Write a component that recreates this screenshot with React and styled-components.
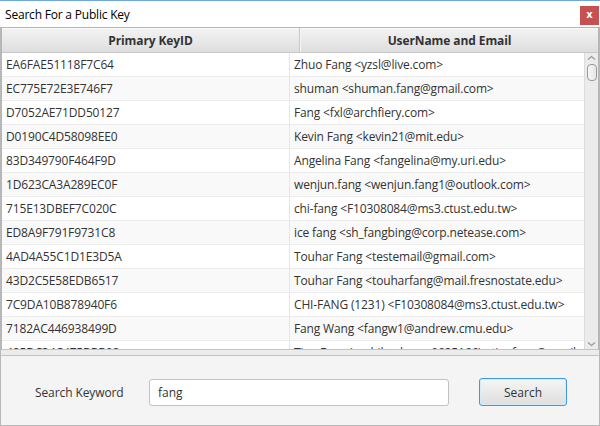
import React from 'react';
import styled, { createGlobalStyle } from 'styled-components';

const GlobalStyle = createGlobalStyle`
  html, body {
    margin: 0;
    padding: 0;
    background: #ffffff;
  }
  * { box-sizing: border-box; }
`;

const Window = styled.div`
  width: 600px;
  height: 426px;
  display: flex;
  flex-direction: column;
  font-family: "Open Sans", "Noto Sans", sans-serif;
  font-size: 12px;
  color: #333333;
  border-top: 1px solid #6fa7dd;
  overflow: hidden;
`;

const TitleBar = styled.div`
  height: 26px;
  flex: none;
  display: flex;
  align-items: center;
  justify-content: space-between;
  padding: 0 1px 0 5px;
  background: #ffffff;
  color: #000000;
  font-size: 12px;
  letter-spacing: -0.2px;
`;

const CloseButton = styled.div`
  width: 19px;
  height: 19px;
  margin-top: 2px;
  background: #c75050;
  color: #ffffff;
  font-family: "DejaVu Sans", sans-serif;
  font-weight: bold;
  font-size: 10px;
  display: flex;
  align-items: center;
  justify-content: center;
  line-height: 1;
`;

const Frame = styled.div`
  flex: 1;
  display: flex;
  flex-direction: column;
  border-left: 1px solid #b8b8b8;
  border-right: 1px solid #b8b8b8;
  border-bottom: 1px solid #b8b8b8;
  background: #f4f4f4;
  min-height: 0;
`;

const Table = styled.div`
  height: 323px;
  flex: none;
  display: flex;
  flex-direction: column;
  border: 1px solid #b5b5b5;
  border-bottom-color: #c4c4c4;
  background: #ffffff;
  overflow: hidden;
`;

const HeaderRow = styled.div`
  height: 25px;
  flex: none;
  display: grid;
  grid-template-columns: 298px 1fr;
  border-bottom: 1px solid #c8c8c8;
`;

const HeaderCell = styled.div`
  display: flex;
  align-items: center;
  justify-content: center;
  font-weight: bold;
  color: #333333;
  background: linear-gradient(to bottom, #f3f3f3 0%, #e9e9e9 50%, #dedede 100%);
  border-right: ${p => (p.last ? 'none' : '1px solid #c8c8c8')};
  border-left: ${p => (p.last ? '1px solid #f6f6f6' : 'none')};
  box-shadow: inset 0 1px 0 #fbfbfb;
  letter-spacing: -0.1px;
`;

const Body = styled.div`
  flex: 1;
  display: flex;
  min-height: 0;
`;

const Rows = styled.div`
  flex: 1;
  overflow: hidden;
`;

const Row = styled.div`
  height: 24px;
  display: grid;
  grid-template-columns: 288px 1fr;
  background: ${p => (p.odd ? '#f9f9f9' : '#ffffff')};
  border-bottom: 1px solid #ececec;
`;

const Cell = styled.div`
  display: flex;
  align-items: center;
  padding-left: 4px;
  white-space: nowrap;
  overflow: hidden;
  color: #333333;
  border-right: ${p => (p.last ? 'none' : '1px solid #e6e6e6')};
  letter-spacing: -0.15px;
`;

const ScrollBar = styled.div`
  width: 14px;
  flex: none;
  display: flex;
  flex-direction: column;
  align-items: center;
  background: #ebebeb;
  border-left: 1px solid #dcdcdc;
`;

const Arrow = styled.div`
  height: 10px;
  width: 100%;
  display: flex;
  align-items: center;
  justify-content: center;
  flex: none;
`;

const Thumb = styled.div`
  width: 10px;
  height: 17px;
  margin-top: 1px;
  border: 1px solid #9a9a9a;
  border-radius: 4px;
  background: linear-gradient(to right, #f6f6f6, #e6e6e6);
`;

const Track = styled.div`
  flex: 1;
`;

const Divider = styled.div`
  height: 6px;
  flex: none;
  background: #ececec;
  border-bottom: 1px solid #c4c4c4;
`;

const Controls = styled.div`
  flex: 1;
  display: flex;
  align-items: center;
  padding: 3px 0 0 34px;
  background: #f4f4f4;
`;

const Label = styled.div`
  width: 114px;
  color: #333333;
  letter-spacing: -0.1px;
`;

const Input = styled.input`
  width: 300px;
  height: 27px;
  border: 1px solid #c2c2c2;
  border-radius: 3px;
  padding: 0 8px;
  font-family: "Open Sans", "Noto Sans", sans-serif;
  font-size: 12px;
  color: #333333;
  background: #ffffff;
  outline: none;
`;

const Button = styled.button`
  margin-left: 30px;
  width: 88px;
  height: 28px;
  border: 1px solid #3d9ae0;
  border-radius: 3px;
  background: linear-gradient(to bottom, #f5f5f5, #dedede);
  box-shadow: inset 0 0 0 1px #d6ebfa;
  font-family: "Open Sans", "Noto Sans", sans-serif;
  font-size: 12px;
  color: #333333;
  padding: 0;
`;

const Chevron = ({ down }) => (
  <svg width="9" height="6" viewBox="0 0 9 6">
    <path
      d={down ? 'M1 1.5 L4.5 4.5 L8 1.5' : 'M1 4.5 L4.5 1.5 L8 4.5'}
      fill="none"
      stroke="#9a9a9a"
      strokeWidth="1.2"
    />
  </svg>
);

const keys = [
  ['EA6FAE51118F7C64', 'Zhuo Fang <yzsl@live.com>'],
  ['EC775E72E3E746F7', 'shuman <shuman.fang@gmail.com>'],
  ['D7052AE71DD50127', 'Fang <fxl@archfiery.com>'],
  ['D0190C4D58098EE0', 'Kevin Fang <kevin21@mit.edu>'],
  ['83D349790F464F9D', 'Angelina Fang <fangelina@my.uri.edu>'],
  ['1D623CA3A289EC0F', 'wenjun.fang <wenjun.fang1@outlook.com>'],
  ['715E13DBEF7C020C', 'chi-fang <F10308084@ms3.ctust.edu.tw>'],
  ['ED8A9F791F9731C8', 'ice fang <sh_fangbing@corp.netease.com>'],
  ['4AD4A55C1D1E3D5A', 'Touhar Fang <testemail@gmail.com>'],
  ['43D2C5E58EDB6517', 'Touhar Fang <touharfang@mail.fresnostate.edu>'],
  ['7C9DA10B878940F6', 'CHI-FANG (1231) <F10308084@ms3.ctust.edu.tw>'],
  ['7182AC446938499D', 'Fang Wang <fangw1@andrew.cmu.edu>'],
  ['485DC34C475BBB98', 'Ting Fang (mobile phone 0625166) <tingfang@gmail.com>'],
];

export default function App() {
  return (
    <>
      <GlobalStyle />
      <Window>
        <TitleBar>
          <span>Search For a Public Key</span>
          <CloseButton>x</CloseButton>
        </TitleBar>
        <Frame>
          <Table>
            <HeaderRow>
              <HeaderCell>Primary KeyID</HeaderCell>
              <HeaderCell last>UserName and Email</HeaderCell>
            </HeaderRow>
            <Body>
              <Rows>
                {keys.map(([id, user], i) => (
                  <Row key={id} odd={i % 2 === 1}>
                    <Cell>{id}</Cell>
                    <Cell last>{user}</Cell>
                  </Row>
                ))}
              </Rows>
              <ScrollBar>
                <Arrow><Chevron /></Arrow>
                <Thumb />
                <Track />
                <Arrow><Chevron down /></Arrow>
              </ScrollBar>
            </Body>
          </Table>
          <Divider />
          <Controls>
            <Label>Search Keyword</Label>
            <Input defaultValue="fang" />
            <Button>Search</Button>
          </Controls>
        </Frame>
      </Window>
    </>
  );
}
